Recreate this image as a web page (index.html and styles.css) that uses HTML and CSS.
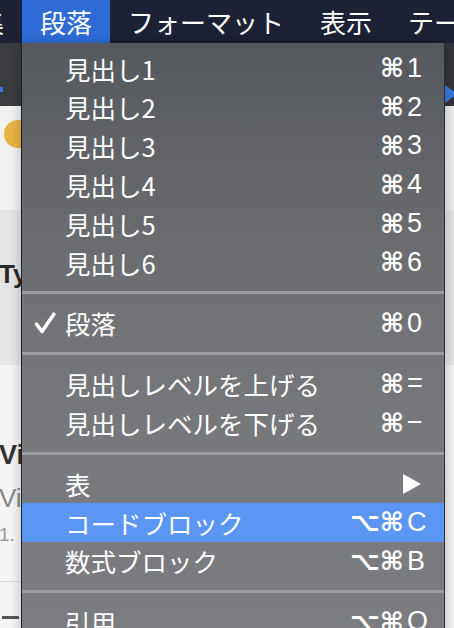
FILE: index.html
```html
<!DOCTYPE html>
<html lang="ja">
<head>
<meta charset="utf-8">
<title>段落メニュー</title>
<link rel="stylesheet" href="styles.css">
</head>
<body>
<div class="screen">
  <header class="menubar">
    <span class="mb-item mb-cut">編集</span>
    <span class="mb-item mb-active">段落</span>
    <span class="mb-item">フォーマット</span>
    <span class="mb-item">表示</span>
    <span class="mb-item">テーマ</span>
  </header>

  <div class="workspace">
    <aside class="pane-left">
      <div class="toolbar"><span class="tick"></span></div>
      <div class="files"><span class="dot"></span></div>
      <div class="band"><span class="title">Ty</span></div>
      <div class="doc">
        <div class="doc-h">Vi</div>
        <div class="doc-sub">Vi</div>
        <div class="doc-num">1.</div>
        <div class="doc-rule"></div>
        <div class="doc-dash"></div>
      </div>
    </aside>
    <div class="pane-mid"></div>
    <aside class="pane-right">
      <div class="toolbar-r"><span class="tri-r"></span></div>
      <div class="files-r"></div>
      <div class="band-r"></div>
      <div class="doc-r"></div>
    </aside>
  </div>

  <nav class="menu">
    <div class="row"><span class="check"></span><span class="label">見出し1</span><span class="mods">⌘</span><span class="key">1</span></div>
    <div class="row"><span class="check"></span><span class="label">見出し2</span><span class="mods">⌘</span><span class="key">2</span></div>
    <div class="row"><span class="check"></span><span class="label">見出し3</span><span class="mods">⌘</span><span class="key">3</span></div>
    <div class="row"><span class="check"></span><span class="label">見出し4</span><span class="mods">⌘</span><span class="key">4</span></div>
    <div class="row"><span class="check"></span><span class="label">見出し5</span><span class="mods">⌘</span><span class="key">5</span></div>
    <div class="row"><span class="check"></span><span class="label">見出し6</span><span class="mods">⌘</span><span class="key">6</span></div>
    <div class="sep"></div>
    <div class="row"><span class="check"><svg class="check-ico" viewBox="0 0 22 22" width="22" height="22"><path d="M2.5 12.2 L8 19.5 L19.8 2.2" fill="none" stroke="#fff" stroke-width="3.6" stroke-linecap="round" stroke-linejoin="round"/></svg></span><span class="label">段落</span><span class="mods">⌘</span><span class="key">0</span></div>
    <div class="sep"></div>
    <div class="row"><span class="check"></span><span class="label">見出しレベルを上げる</span><span class="mods">⌘</span><span class="key">=</span></div>
    <div class="row"><span class="check"></span><span class="label">見出しレベルを下げる</span><span class="mods">⌘</span><span class="key">−</span></div>
    <div class="sep"></div>
    <div class="row"><span class="check"></span><span class="label">表</span><span class="submenu"><svg viewBox="0 0 18 20" width="18" height="20"><polygon points="0,0 18,10 0,20" fill="#fff"/></svg></span></div>
    <div class="row row-active"><span class="check"></span><span class="label">コードブロック</span><span class="mods">⌥⌘</span><span class="key">C</span></div>
    <div class="row"><span class="check"></span><span class="label">数式ブロック</span><span class="mods">⌥⌘</span><span class="key">B</span></div>
    <div class="sep"></div>
    <div class="row"><span class="check"></span><span class="label">引用</span><span class="mods">⌥⌘</span><span class="key">Q</span></div>
  </nav>
</div>
</body>
</html>
```

FILE: styles.css
```css
* { box-sizing: border-box; }

html, body {
  margin: 0;
  padding: 0;
  width: 454px;
  height: 628px;
  overflow: hidden;
  background: #f3f3f3;
}

.screen {
  position: relative;
  width: 454px;
  height: 628px;
  overflow: hidden;
  display: flex;
  flex-direction: column;
  font-family: "Noto Sans CJK JP", "Noto Sans", sans-serif;
}

/* ---------- menu bar ---------- */
.menubar {
  height: 43px;
  flex: none;
  display: flex;
  align-items: stretch;
  background: #1c2134;
  color: #fff;
  font-size: 26px;
  white-space: nowrap;
}

.mb-item {
  display: flex;
  align-items: center;
  padding: 0 18px;
  line-height: 1;
}

.mb-cut { margin-left: -66px; }

.mb-active { background: #2e6bd6; }

/* ---------- background window ---------- */
.workspace {
  flex: 1;
  display: flex;
}

.pane-left {
  width: 22px;
  flex: none;
  display: flex;
  flex-direction: column;
  overflow: hidden;
}

.toolbar {
  height: 63px;
  background: #3a3c40;
  position: relative;
}

.tick {
  position: absolute;
  left: 0;
  top: 44px;
  width: 3px;
  height: 5px;
  background: #3a78e0;
}

.files {
  height: 104px;
  background: #f1f1f1;
  position: relative;
}

.dot {
  position: absolute;
  left: 4px;
  top: 14px;
  width: 28px;
  height: 28px;
  border-radius: 50%;
  background: #e6b444;
}

.band {
  height: 155px;
  background: #e5e5e5;
  padding-top: 49px;
  white-space: nowrap;
}

.title {
  font-family: "Liberation Sans", Arial, sans-serif;
  font-weight: 700;
  font-size: 26px;
  color: #2a2a2a;
  margin-left: -1px;
}

.doc {
  flex: 1;
  background: #f4f4f4;
  padding-top: 75px;
  font-family: "Liberation Sans", Arial, sans-serif;
  white-space: nowrap;
}

.doc-h {
  font-weight: 700;
  font-size: 27px;
  color: #333;
  line-height: 30px;
  margin-left: -1px;
}

.doc-sub {
  font-size: 26px;
  color: #8a8a8a;
  line-height: 30px;
  margin-top: 13px;
  margin-left: -1px;
}

.doc-num {
  font-size: 19px;
  color: #9a9a9a;
  line-height: 24px;
  margin-top: 10px;
  margin-left: -1px;
}

.doc-rule {
  height: 1px;
  background: #d8d8d8;
  margin-top: 34px;
}

.doc-dash {
  height: 3px;
  width: 17px;
  margin-left: 2px;
  margin-top: 34px;
  background: #555;
}

.pane-mid { flex: 1; }

.pane-right {
  width: 10px;
  flex: none;
  display: flex;
  flex-direction: column;
}

.toolbar-r {
  height: 63px;
  background: #33353a;
  position: relative;
}

.tri-r {
  position: absolute;
  left: 1px;
  top: 42px;
  width: 0;
  height: 0;
  border-top: 9px solid transparent;
  border-bottom: 9px solid transparent;
  border-left: 12px solid #3a78e0;
}

.files-r { height: 104px; background: #ececec; }
.band-r { height: 155px; background: #e3e3e3; }
.doc-r { flex: 1; background: #f2f2f2; }

/* ---------- dropdown menu ---------- */
.menu {
  position: absolute;
  left: 21px;
  top: 43px;
  width: 424px;
  bottom: -40px;
  padding-top: 6px;
  background: linear-gradient(to bottom, #55585d 0%, #66686c 25%, #727377 45%, #797a7e 70%, #7c7d81 100%);
  border-left: 1px solid #1e1f22;
  border-right: 1px solid #2a2b2e;
  box-shadow: -4px 0 8px rgba(0, 0, 0, 0.12), 4px 0 8px rgba(0, 0, 0, 0.12);
  color: #fff;
  display: flex;
  flex-direction: column;
}

.row {
  height: 38.8px;
  flex: none;
  display: flex;
  align-items: center;
  font-size: 25.5px;
  line-height: 1;
}

.row-active { background: #5b96f5; }

.check {
  width: 43px;
  flex: none;
  display: flex;
  align-items: center;
}

.check-ico { margin-left: 12px; }

.label {
  flex: 1;
  white-space: nowrap;
}

.mods {
  font-family: "DejaVu Sans", sans-serif;
  font-weight: 700;
  font-size: 26px;
  text-align: right;
}

.key {
  width: 40px;
  flex: none;
  padding-left: 3px;
  font-family: "Liberation Sans", Arial, sans-serif;
  font-size: 27px;
}

.submenu {
  width: 41px;
  flex: none;
  display: flex;
  align-items: center;
}

.sep {
  height: 22px;
  flex: none;
  display: flex;
  align-items: center;
}

.sep::before {
  content: "";
  display: block;
  width: 100%;
  height: 3px;
  background: #9b9ca0;
}
```
